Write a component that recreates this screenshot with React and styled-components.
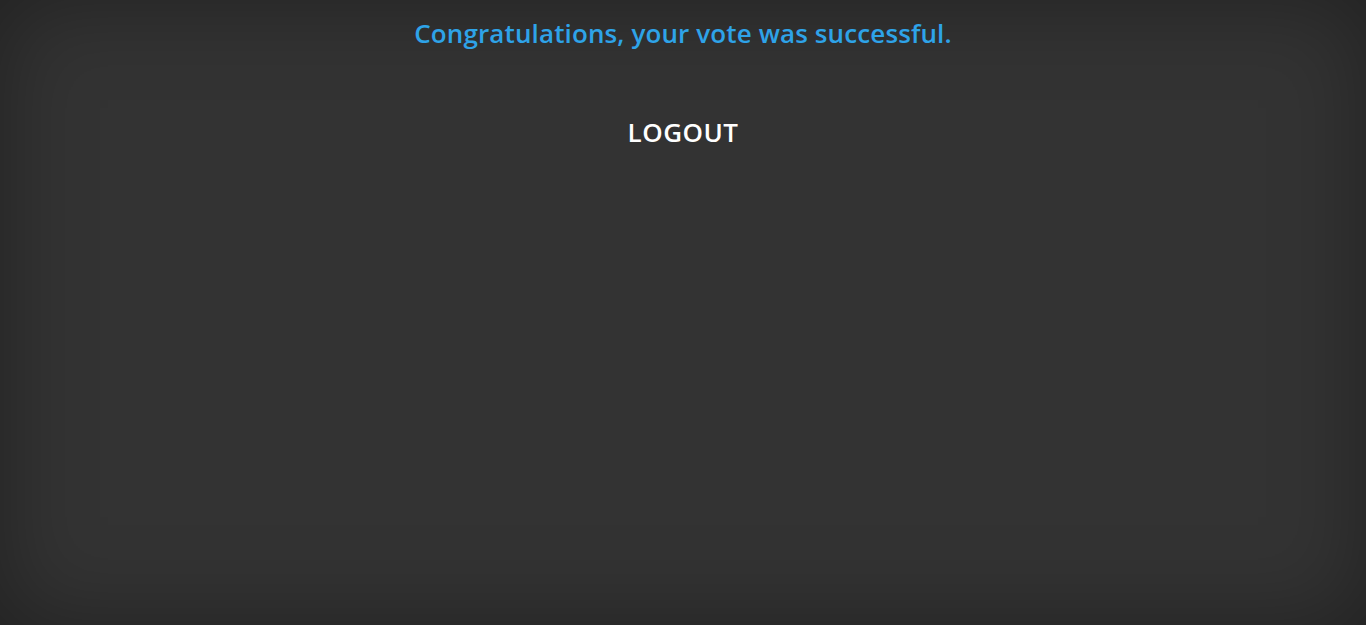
import React from "react";
import styled, { createGlobalStyle } from "styled-components";

const Global = createGlobalStyle`
  html, body { margin: 0; padding: 0; height: 100%; }
  body { background: #333333; font-family: "Open Sans", "Noto Sans", sans-serif; }
  #root { height: 100%; }
`;

const Page = styled.div`
  min-height: 625px;
  height: 100vh;
  box-sizing: border-box;
  background: #333333;
  box-shadow: inset 0 0 90px rgba(0, 0, 0, 0.35);
  display: flex;
  flex-direction: column;
  align-items: center;
  padding-top: 16px;
`;

const Message = styled.h2`
  margin: 0;
  font-size: 26px;
  line-height: 34px;
  font-weight: 600;
  letter-spacing: 0.12px;
  color: #2ea3e8;
`;

const LogoutButton = styled.button`
  margin-top: 65px;
  background: none;
  border: none;
  padding: 0;
  font-family: inherit;
  font-size: 26px;
  line-height: 34px;
  font-weight: 600;
  letter-spacing: 0.5px;
  color: #ffffff;
  cursor: pointer;
`;

export default function App() {
  return (
    <>
      <Global />
      <Page>
        <Message>Congratulations, your vote was successful.</Message>
        <LogoutButton>LOGOUT</LogoutButton>
      </Page>
    </>
  );
}
